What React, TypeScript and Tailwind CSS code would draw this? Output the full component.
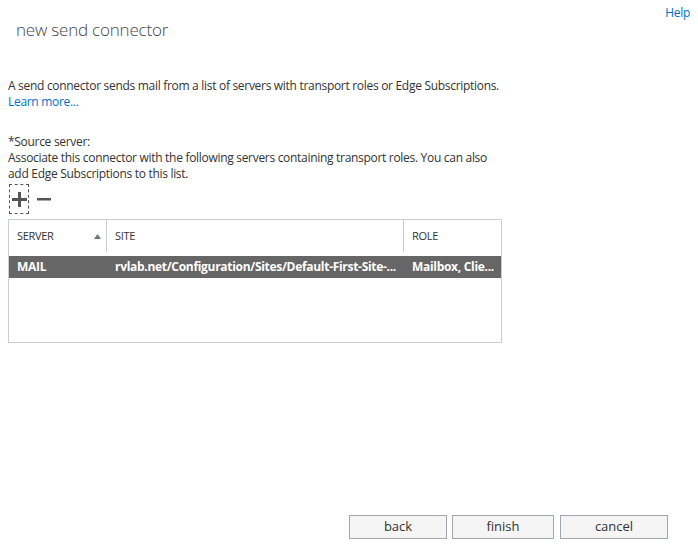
import React from 'react';

const font = { fontFamily: '"Open Sans", "Liberation Sans", sans-serif' };

interface Row {
  server: string;
  site: string;
  role: string;
}

const rows: Row[] = [
  {
    server: 'MAIL',
    site: 'rvlab.net/Configuration/Sites/Default-First-Site-...',
    role: 'Mailbox, Clie...',
  },
];

function SortArrow() {
  return (
    <svg width="7" height="5" viewBox="0 0 7 5" className="mt-[1px]">
      <polygon points="3.5,0 7,5 0,5" fill="#6b7d6b" />
    </svg>
  );
}

function PlusIcon() {
  return (
    <svg width="15" height="15" viewBox="0 0 15 15">
      <rect x="6" y="0" width="3" height="15" fill="#555" />
      <rect x="0" y="6" width="15" height="3" fill="#555" />
    </svg>
  );
}

function MinusIcon() {
  return (
    <svg width="14" height="3" viewBox="0 0 14 3">
      <rect x="0" y="0" width="14" height="2.5" fill="#555" />
    </svg>
  );
}

export default function App() {
  return (
    <div
      className="w-[698px] h-[546px] bg-white text-[#333] flex flex-col"
      style={font}
    >
      {/* header */}
      <div className="flex flex-row justify-between items-start">
        <h1 className="pl-4 pt-[18px] text-[17px] font-light leading-[24px] tracking-[-0.2px] text-[#444]">
          new send connector
        </h1>
        <a className="pr-2 pt-[5px] text-[12px] leading-[16px] tracking-[-0.3px] text-[#0072c6]">Help</a>
      </div>

      {/* body */}
      <div className="px-2 pt-[36px] text-[12px] leading-[16px] tracking-[-0.3px]">
        <p>A send connector sends mail from a list of servers with transport roles or Edge Subscriptions.</p>
        <a className="text-[#0072c6]">Learn more...</a>

        <div className="pt-[24px]">
          <p>*Source server:</p>
          <p className="w-[490px]">
            Associate this connector with the following servers containing transport roles. You can also add Edge Subscriptions to this list.
          </p>
        </div>

        {/* toolbar */}
        <div className="flex flex-row items-center gap-[8px] pt-[2px] pl-[1px]">
          <div className="w-[20px] h-[30px] border border-dashed border-[#555] flex items-center justify-center">
            <PlusIcon />
          </div>
          <MinusIcon />
        </div>

        {/* grid */}
        <div className="mt-[5px] w-[494px] h-[124px] border border-[#c8d0d4]">
          <div className="flex flex-row h-[32px] text-[11px] text-[#333]">
            <div className="w-[98px] border-r border-[#c8d0d4] flex items-center justify-between pl-[8px] pr-[5px]">
              <span>SERVER</span>
              <SortArrow />
            </div>
            <div className="w-[297px] border-r border-[#c8d0d4] flex items-center pl-[8px]">
              <span>SITE</span>
            </div>
            <div className="flex-1 flex items-center pl-[8px]">
              <span>ROLE</span>
            </div>
          </div>
          <div className="pt-[4px]">
            {rows.map((row) => (
              <div
                key={row.server}
                className="flex flex-row h-[22px] items-center bg-[#666666] text-white font-bold text-[12px] whitespace-nowrap"
              >
                <div className="w-[98px] pl-[8px]">{row.server}</div>
                <div className="w-[297px] pl-[8px]">{row.site}</div>
                <div className="flex-1 pl-[8px]">{row.role}</div>
              </div>
            ))}
          </div>
        </div>
      </div>

      {/* footer */}
      <div className="mt-auto flex flex-row justify-end pr-[30px] pb-[7px]">
        <button className="w-[98px] h-[24px] border border-[#a0a8aa] bg-[#f5f5f5] text-[13px] text-[#333]">back</button>
        <button className="ml-[5px] w-[102px] h-[24px] border border-[#a0a8aa] bg-[#f5f5f5] text-[13px] text-[#333]">finish</button>
        <button className="ml-[6px] w-[108px] h-[24px] border border-[#a0a8aa] bg-[#f5f5f5] text-[13px] text-[#333]">cancel</button>
      </div>
    </div>
  );
}
